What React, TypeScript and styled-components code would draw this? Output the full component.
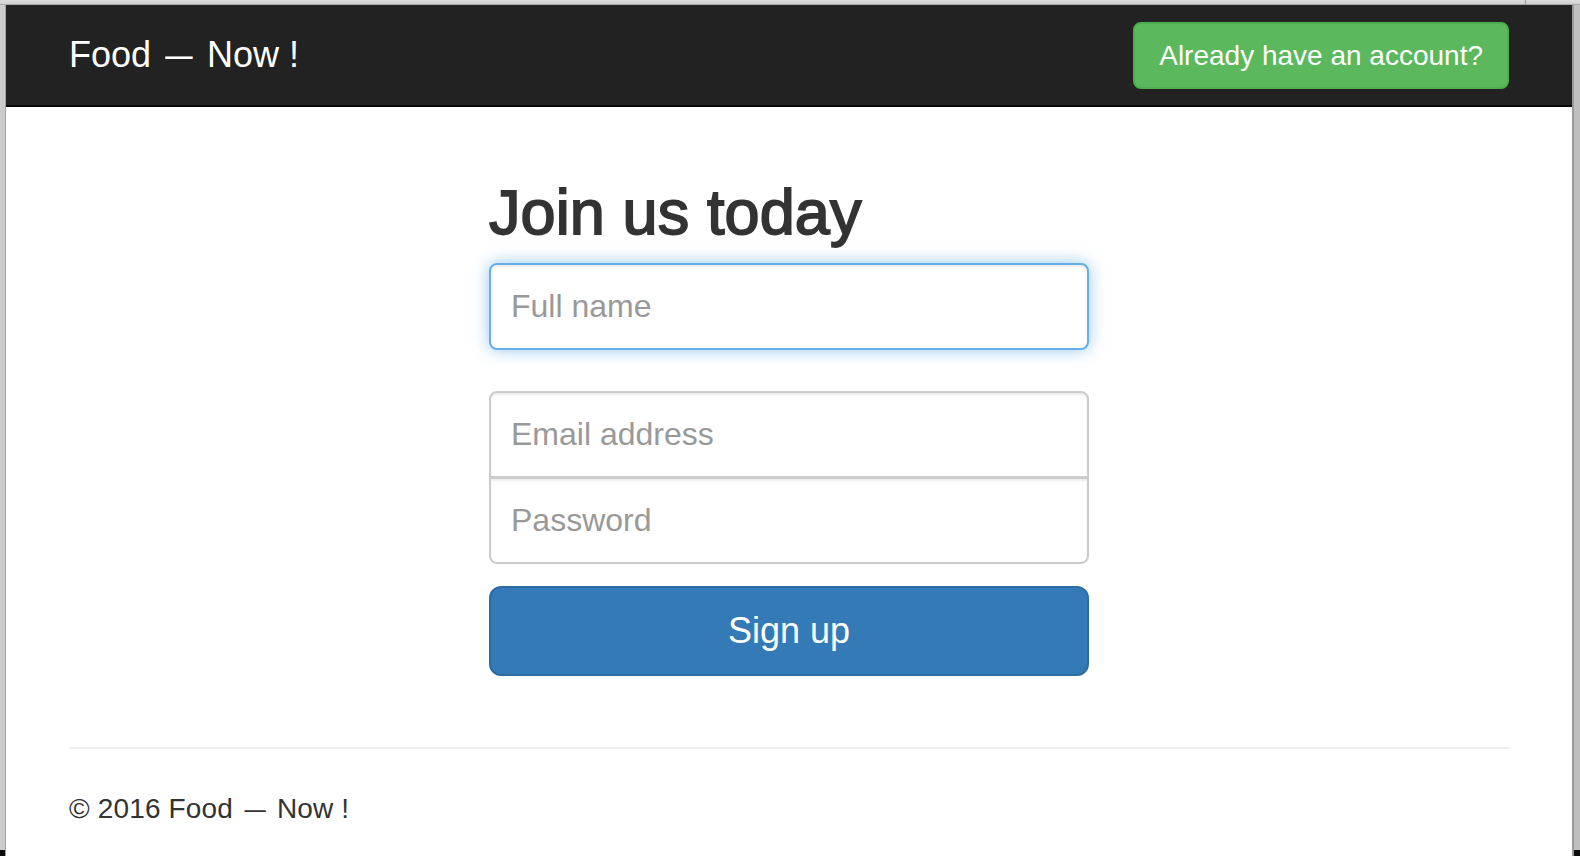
import React from "react";
import styled, { createGlobalStyle } from "styled-components";

const GlobalStyle = createGlobalStyle`
  html, body {
    margin: 0;
    padding: 0;
    width: 1580px;
    height: 856px;
    overflow: hidden;
    background: #c9c9c9;
  }
  * { box-sizing: border-box; }
  body {
    font-family: "Liberation Sans", Arial, Helvetica, sans-serif;
    color: #333333;
  }
`;

const Screen = styled.div`
  width: 1580px;
  height: 856px;
  display: grid;
  grid-template-rows: 5px 1fr;
`;

const TopStrip = styled.div`
  background: linear-gradient(#dcdcdc, #cfcfcf);
  border-bottom: 1px solid #a9a9a9;
  display: flex;
  justify-content: flex-end;
  padding-right: 54px;
`;

const TopTick = styled.div`
  width: 1px;
  background: #9c9c9c;
`;

const Body = styled.div`
  display: grid;
  grid-template-columns: 6px 1fr 8px;
  min-height: 0;
`;

const Edge = styled.div<{ $side: "left" | "right" }>`
  display: flex;
  flex-direction: column;
  justify-content: flex-end;
  background: ${(p) => (p.$side === "left" ? "#cbcbcb" : "#bfbfbf")};
  ${(p) =>
    p.$side === "left"
      ? "border-right: 1px solid #a2a2a2;"
      : "border-left: 2px solid #9a9a9a;"}
`;

const EdgeFoot = styled.div`
  height: 6px;
  background: #0c0c0c;
`;

const Window = styled.div`
  background: #ffffff;
  display: flex;
  flex-direction: column;
  min-width: 0;
`;

const Navbar = styled.nav`
  height: 102px;
  background: #222222;
  border-bottom: 2px solid #080808;
`;

const Container = styled.div`
  width: 1500px;
  margin: 0 auto;
  padding: 0 30px;
`;

const NavRow = styled(Container)`
  display: flex;
  justify-content: space-between;
  align-items: flex-start;
`;

const Brand = styled.a`
  display: block;
  padding: 30px 0;
  font-size: 36px;
  line-height: 40px;
  color: #ffffff;
  text-decoration: none;
`;

const Dash = styled.span`
  display: inline-block;
  transform: scaleX(0.76);
`;

const NavButton = styled.button`
  margin-top: 17px;
  height: 67px;
  padding: 0 24px;
  font-family: inherit;
  font-size: 28px;
  line-height: 40px;
  color: #ffffff;
  background: #5cb85c;
  border: 2px solid #4cae4c;
  border-radius: 8px;
  cursor: pointer;
`;

const Main = styled(Container)`
  padding-top: 1px;
`;

const SigninForm = styled.form`
  width: 660px;
  margin: 0 auto;
  padding: 30px;
  display: flex;
  flex-direction: column;
`;

const Heading = styled.h2`
  margin: 41px 0 18px;
  font-size: 63px;
  line-height: 66px;
  font-weight: 400;
  letter-spacing: 0.1px;
  color: #333333;
  -webkit-text-stroke: 1.8px #333333;
`;

const Field = styled.input<{ $stack?: "top" | "bottom"; $focus?: boolean }>`
  display: block;
  width: 100%;
  height: ${(p) => (p.$stack ? "87px" : "87px")};
  padding: 0 20px;
  font-family: inherit;
  font-size: 32px;
  color: #555555;
  background: #ffffff;
  border: 2px solid ${(p) => (p.$focus ? "#66afe9" : "#cccccc")};
  border-radius: ${(p) =>
    p.$stack === "top" ? "8px 8px 0 0" : p.$stack === "bottom" ? "0 0 8px 8px" : "8px"};
  box-shadow: ${(p) =>
    p.$focus
      ? "inset 0 2px 2px rgba(0,0,0,.075), 0 0 16px rgba(102,175,233,.7)"
      : "inset 0 2px 2px rgba(0,0,0,.075)"};
  outline: none;
  margin-bottom: ${(p) => (p.$stack === "top" ? "-1px" : p.$stack === "bottom" ? "22px" : "41px")};
  position: relative;

  &::placeholder {
    color: #999999;
    opacity: 1;
  }
`;

const SubmitButton = styled.button`
  width: 100%;
  height: 90px;
  font-family: inherit;
  font-size: 36px;
  color: #ffffff;
  background: #337ab7;
  border: 2px solid #2e6da4;
  border-radius: 12px;
  cursor: pointer;
`;

const Rule = styled.hr`
  margin: 41px 0 40px;
  border: 0;
  border-top: 2px solid #eeeeee;
`;

const Footer = styled.footer`
  padding-top: 0;
`;

const FooterText = styled.p`
  margin: 0;
  font-size: 28px;
  line-height: 40px;
  letter-spacing: 0.15px;
  color: #333333;
`;

export default function App() {
  return (
    <>
      <GlobalStyle />
      <Screen>
        <TopStrip>
          <TopTick />
        </TopStrip>
        <Body>
          <Edge $side="left">
            <EdgeFoot />
          </Edge>
          <Window>
            <Navbar>
              <NavRow>
                <Brand href="#">
                  Food <Dash>—</Dash> Now !
                </Brand>
                <NavButton type="button">Already have an account?</NavButton>
              </NavRow>
            </Navbar>
            <Main>
              <SigninForm onSubmit={(e) => e.preventDefault()}>
                <Heading>Join us today</Heading>
                <Field $focus placeholder="Full name" type="text" />
                <Field $stack="top" placeholder="Email address" type="email" />
                <Field $stack="bottom" placeholder="Password" type="password" />
                <SubmitButton type="submit">Sign up</SubmitButton>
              </SigninForm>
              <Rule />
              <Footer>
                <FooterText>
                  © 2016 Food <Dash>—</Dash> Now !
                </FooterText>
              </Footer>
            </Main>
          </Window>
          <Edge $side="right">
            <EdgeFoot />
          </Edge>
        </Body>
      </Screen>
    </>
  );
}
